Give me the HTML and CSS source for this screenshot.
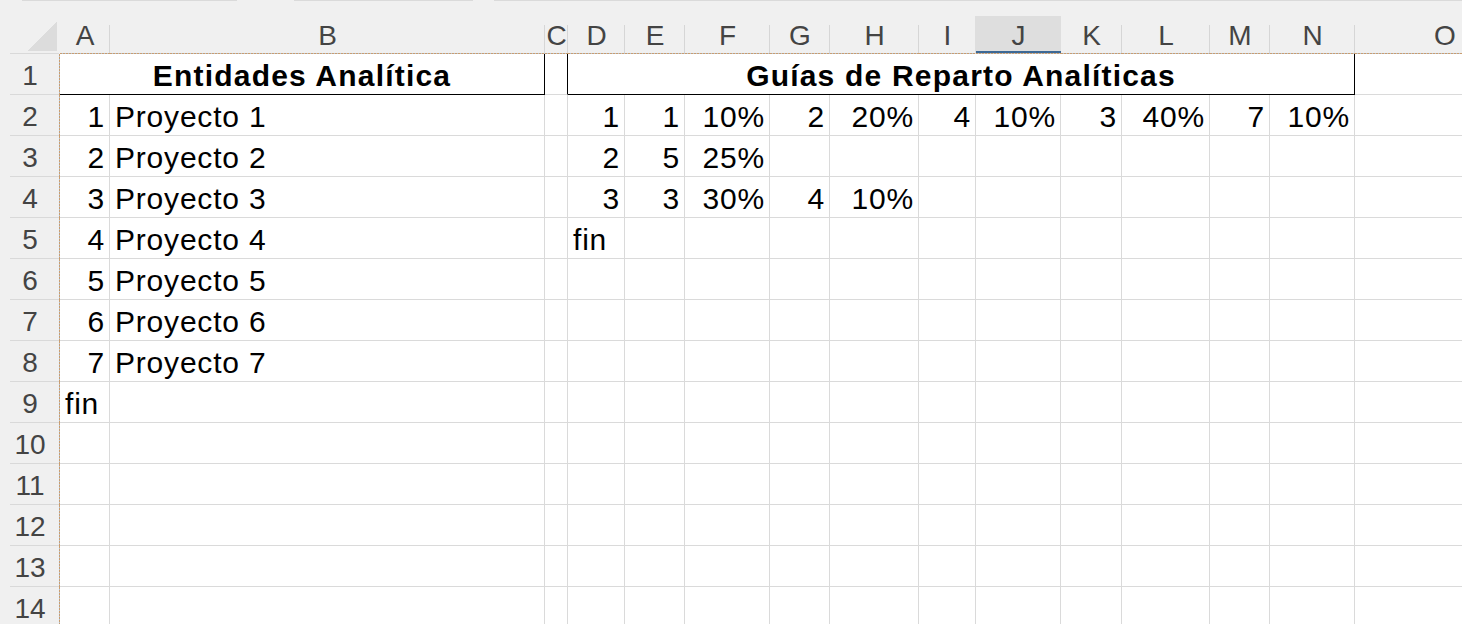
FILE: index.html
```html
<!DOCTYPE html>
<html lang="es">
<head>
<meta charset="utf-8">
<title>Entidades Analítica</title>
<link rel="stylesheet" href="styles.css">
</head>
<body>
<div class="topbar">
  <span class="seg s1"></span><span class="seg s2"></span><span class="seg s3"></span>
</div>
<div class="sheet">
  <div class="hdr">
    <div class="corner"><svg class="tri" width="30" height="30" viewBox="0 0 30 30" shape-rendering="crispEdges"><polygon points="0,30 30,0 30,30" fill="#dcdcdc"/></svg></div>
    <div>A</div><div>B</div><div>C</div><div>D</div><div>E</div><div>F</div><div>G</div><div>H</div><div>I</div><div class="sel">J</div><div>K</div><div>L</div><div>M</div><div>N</div><div>O</div>
  </div>

  <div class="row">
    <div class="rh">1</div>
    <div class="title t1">Entidades Analítica</div>
    <div class="edge"></div>
    <div class="title t2">Guías de Reparto Analíticas</div>
    <div></div>
  </div>

  <div class="row">
    <div class="rh">2</div>
    <div class="n">1</div><div>Proyecto 1</div><div></div>
    <div class="n">1</div><div class="n">1</div><div class="n">10%</div><div class="n">2</div><div class="n">20%</div><div class="n">4</div><div class="n">10%</div><div class="n">3</div><div class="n">40%</div><div class="n">7</div><div class="n">10%</div><div></div>
  </div>

  <div class="row">
    <div class="rh">3</div>
    <div class="n">2</div><div>Proyecto 2</div><div></div>
    <div class="n">2</div><div class="n">5</div><div class="n">25%</div><div></div><div></div><div></div><div></div><div></div><div></div><div></div><div></div><div></div>
  </div>

  <div class="row">
    <div class="rh">4</div>
    <div class="n">3</div><div>Proyecto 3</div><div></div>
    <div class="n">3</div><div class="n">3</div><div class="n">30%</div><div class="n">4</div><div class="n">10%</div><div></div><div></div><div></div><div></div><div></div><div></div><div></div>
  </div>

  <div class="row">
    <div class="rh">5</div>
    <div class="n">4</div><div>Proyecto 4</div><div></div>
    <div>fin</div><div></div><div></div><div></div><div></div><div></div><div></div><div></div><div></div><div></div><div></div><div></div>
  </div>

  <div class="row">
    <div class="rh">6</div>
    <div class="n">5</div><div>Proyecto 5</div>
    <div></div><div></div><div></div><div></div><div></div><div></div><div></div><div></div><div></div><div></div><div></div><div></div><div></div>
  </div>

  <div class="row">
    <div class="rh">7</div>
    <div class="n">6</div><div>Proyecto 6</div>
    <div></div><div></div><div></div><div></div><div></div><div></div><div></div><div></div><div></div><div></div><div></div><div></div><div></div>
  </div>

  <div class="row">
    <div class="rh">8</div>
    <div class="n">7</div><div>Proyecto 7</div>
    <div></div><div></div><div></div><div></div><div></div><div></div><div></div><div></div><div></div><div></div><div></div><div></div><div></div>
  </div>

  <div class="row">
    <div class="rh">9</div>
    <div>fin</div>
    <div></div><div></div><div></div><div></div><div></div><div></div><div></div><div></div><div></div><div></div><div></div><div></div><div></div><div></div>
  </div>

  <div class="row">
    <div class="rh">10</div>
    <div></div><div></div><div></div><div></div><div></div><div></div><div></div><div></div><div></div><div></div><div></div><div></div><div></div><div></div><div></div>
  </div>

  <div class="row">
    <div class="rh">11</div>
    <div></div><div></div><div></div><div></div><div></div><div></div><div></div><div></div><div></div><div></div><div></div><div></div><div></div><div></div><div></div>
  </div>

  <div class="row">
    <div class="rh">12</div>
    <div></div><div></div><div></div><div></div><div></div><div></div><div></div><div></div><div></div><div></div><div></div><div></div><div></div><div></div><div></div>
  </div>

  <div class="row">
    <div class="rh">13</div>
    <div></div><div></div><div></div><div></div><div></div><div></div><div></div><div></div><div></div><div></div><div></div><div></div><div></div><div></div><div></div>
  </div>

  <div class="row">
    <div class="rh">14</div>
    <div></div><div></div><div></div><div></div><div></div><div></div><div></div><div></div><div></div><div></div><div></div><div></div><div></div><div></div><div></div>
  </div>
</div>
</body>
</html>
```

FILE: styles.css
```css
/* Spreadsheet view: row header, columns A..O */
:root {
  --cols: 60px 50px 435px 23px 57px 60px 85px 60px 89px 57px 85px 61px 88px 60px 85px 180px;
  --grid: #dadada;
  --head-bg: #f0f0f0;
  --head-text: #444444;
  --page-break: #c99d70;
}

* {
  box-sizing: border-box;
  margin: 0;
  padding: 0;
}

body {
  width: 1462px;
  height: 624px;
  overflow: hidden;
  background: var(--head-bg);
  font-family: "Liberation Sans", Arial, sans-serif;
}

/* thin strip above the column headers */
.topbar {
  display: flex;
  height: 16px;
}

.seg {
  height: 1px;
  background: var(--grid);
}

.s1 { margin-left: 22px; width: 215px; }
.s2 { margin-left: 57px; width: 179px; }
.s3 { margin-left: 21px; flex: 1; }

/* column header row */
.hdr {
  display: grid;
  grid-template-columns: var(--cols);
  height: 38px;
}

.hdr > div {
  padding-top: 3px;
  font-size: 28px;
  line-height: 33px;
  color: var(--head-text);
  text-align: center;
  white-space: nowrap;
  background:
    repeating-linear-gradient(to right, var(--page-break) 0 2px, #b4c4d4 2px 3px) left bottom / 100% 1px no-repeat,
    linear-gradient(#d6d6d6, #d6d6d6) right 0 bottom 1px / 1px 28px no-repeat,
    var(--head-bg);
}

.hdr > .corner {
  padding: 0;
  background:
    linear-gradient(#d9d9d9, #d9d9d9) 10px 100% / 49px 1px no-repeat,
    var(--head-bg);
}

.tri {
  display: block;
  margin: 5px 0 0 27px;
}

.hdr > .sel {
  background:
    repeating-linear-gradient(to right, var(--page-break) 0 2px, #b4c4d4 2px 3px) left bottom / 100% 1px no-repeat,
    linear-gradient(#3d6894, #3d6894) left 0 bottom 1px / 100% 2px no-repeat,
    #dedede;
  box-shadow: -1px 0 0 #dedede;
}

/* data rows */
.row {
  display: grid;
  grid-template-columns: var(--cols);
  height: 41px;
}

.row > div {
  padding: 5px 5px 0;
  font-size: 30px;
  letter-spacing: 0.8px;
  line-height: 33px;
  color: #000;
  white-space: nowrap;
  overflow: hidden;
  background: #fff;
  border-right: 1px solid var(--grid);
  border-bottom: 1px solid var(--grid);
}

.row > .n {
  text-align: right;
  padding-right: 4px;
}

.row > .rh {
  padding: 5px 0 0;
  font-size: 28px;
  letter-spacing: 0;
  color: var(--head-text);
  text-align: center;
  border: 0;
  background:
    repeating-linear-gradient(to bottom, var(--page-break) 0 2px, #b4c4d4 2px 3px) right top / 1px 100% no-repeat,
    linear-gradient(#d9d9d9, #d9d9d9) 10px 100% / 49px 1px no-repeat,
    var(--head-bg);
}

/* merged title blocks */
.row > .title {
  font-weight: bold;
  letter-spacing: 1.2px;
  text-align: center;
  border-right-color: #000;
  border-bottom-color: #000;
}

.t1 { grid-column: span 2; }
.t2 { grid-column: span 11; }

.row > .edge {
  border-right-color: #000;
}
```
